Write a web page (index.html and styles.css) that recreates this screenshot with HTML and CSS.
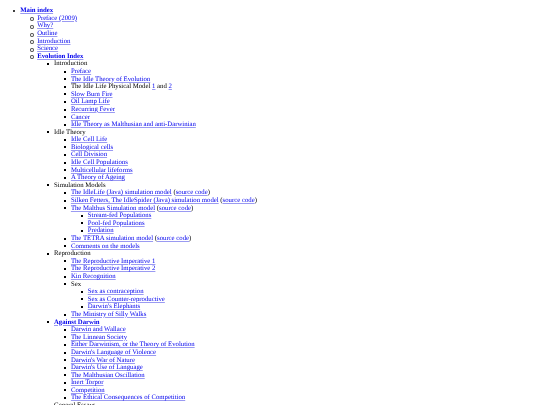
FILE: index.html
```html
<!DOCTYPE html>
<html lang="en">
<head>
    <meta charset="UTF-8">
    <title>Idle Theory</title>
    <link rel="stylesheet" href="styles.css">
</head>
<body>
    <ul class="index">
        <li><a class="main" href="#">Main index</a>
            <ul>
                <li><a href="#">Preface (2009)</a></li>
                <li><a href="#">Why?</a></li>
                <li><a href="#">Outline</a></li>
                <li><a href="#">Introduction</a></li>
                <li><a href="#">Science</a></li>
                <li><a class="main" href="#">Evolution Index</a>
                    <ul>
                        <li>Introduction
                            <ul>
                                <li><a href="#">Preface</a></li>
                                <li><a href="#">The Idle Theory of Evolution</a></li>
                                <li>The Idle Life Physical Model <a href="#">1</a> and <a href="#">2</a></li>
                                <li><a href="#">Slow Burn Fire</a></li>
                                <li><a href="#">Oil Lamp Life</a></li>
                                <li><a href="#">Recurring Fever</a></li>
                                <li><a href="#">Cancer</a></li>
                                <li><a href="#">Idle Theory as Malthusian and anti-Darwinian</a></li>
                            </ul>
                        </li>
                        <li>Idle Theory
                            <ul>
                                <li><a href="#">Idle Cell Life</a></li>
                                <li><a href="#">Biological cells</a></li>
                                <li><a href="#">Cell Division</a></li>
                                <li><a href="#">Idle Cell Populations</a></li>
                                <li><a href="#">Multicellular lifeforms</a></li>
                                <li><a href="#">A Theory of Ageing</a></li>
                            </ul>
                        </li>
                        <li>Simulation Models
                            <ul>
                                <li><a href="#">The IdleLife (Java) simulation model</a> (<a href="#">source code</a>)</li>
                                <li><a href="#">Silken Fetters, The IdleSpider (Java) simulation model</a> (<a href="#">source code</a>)</li>
                                <li><a href="#">The Malthus Simulation model</a> (<a href="#">source code</a>)
                                    <ul>
                                        <li><a href="#">Stream-fed Populations</a></li>
                                        <li><a href="#">Pool-fed Populations</a></li>
                                        <li><a href="#">Predation</a></li>
                                    </ul>
                                </li>
                                <li><a href="#">The TETRA simulation model</a> (<a href="#">source code</a>)</li>
                                <li><a href="#">Comments on the models</a></li>
                            </ul>
                        </li>
                        <li>Reproduction
                            <ul>
                                <li><a href="#">The Reproductive Imperative 1</a></li>
                                <li><a href="#">The Reproductive Imperative 2</a></li>
                                <li><a href="#">Kin Recognition</a></li>
                                <li>Sex
                                    <ul>
                                        <li><a href="#">Sex as contraception</a></li>
                                        <li><a href="#">Sex as Counter-reproductive</a></li>
                                        <li><a href="#">Darwin's Elephants</a></li>
                                    </ul>
                                </li>
                                <li><a href="#">The Ministry of Silly Walks</a></li>
                            </ul>
                        </li>
                        <li><a class="main" href="#">Against Darwin</a>
                            <ul>
                                <li><a href="#">Darwin and Wallace</a></li>
                                <li><a href="#">The Linnean Society</a></li>
                                <li><a href="#">Either Darwinism, or the Theory of Evolution</a></li>
                                <li><a href="#">Darwin's Language of Violence</a></li>
                                <li><a href="#">Darwin's War of Nature</a></li>
                                <li><a href="#">Darwin's Use of Language</a></li>
                                <li><a href="#">The Malthusian Oscillation</a></li>
                                <li><a href="#">Inert Torpor</a></li>
                                <li><a href="#">Competition</a></li>
                                <li><a href="#">The Ethical Consequences of Competition</a></li>
                            </ul>
                        </li>
                        <li>General Essays</li>
                    </ul>
                </li>
            </ul>
        </li>
    </ul>
</body>
</html>
```

FILE: styles.css
```css
html { overflow: hidden; height: 405px; }
body { margin: 0 3.375px; font-family: "Liberation Serif", serif; font-size: 6.75px; line-height: 7.594px; color: #000; background: #fff; text-rendering: geometricPrecision; filter: blur(0.25px); }
ul { padding-left: 16.875px; margin: 0; list-style: none; }
.index { margin: 7.2px 0; }
a { color: #00e; text-decoration-color: #9a9af2; }
.main { font-weight: bold; }

/* list markers drawn by hand, the browser's own sit too far out at this size */
li { position: relative; }
li::before { content: ""; position: absolute; left: -7px; top: 2.6px; width: 2.4px; height: 2.4px; background: #000; transform: rotate(0.02deg); }
.index > li::before { border-radius: 50%; }
.index > li > ul > li::before { width: 1.6px; height: 1.6px; border: 0.5px solid #555; border-radius: 50%; background: none; }
```
